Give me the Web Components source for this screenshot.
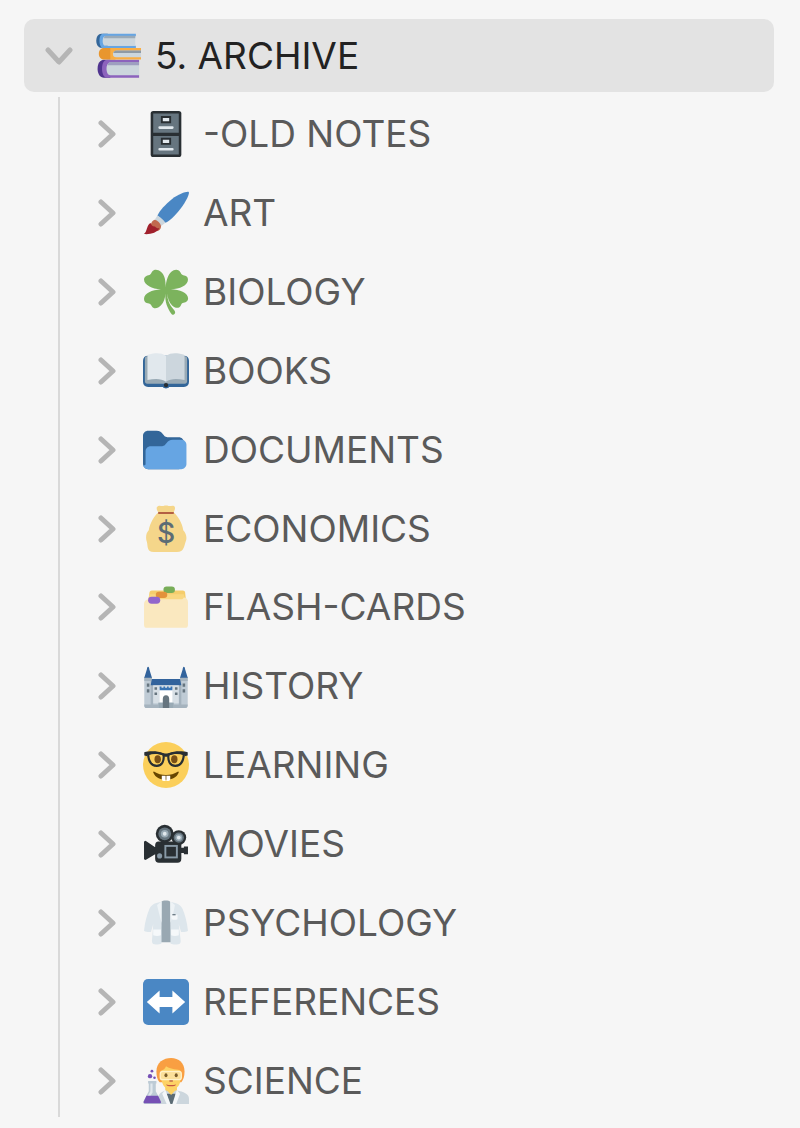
<!DOCTYPE html>
<html lang="en">
<head>
  <meta charset="utf-8">
  <meta name="viewport" content="width=device-width, initial-scale=1">
  <title>Archive</title>
  <style>
    body {
      margin: 0;
      background: #f6f6f6;
      color: #5a5a5a;
      font-family: Inter, "Liberation Sans", sans-serif;
      font-optical-sizing: none;
    }
  </style>
</head>
<body>
  <folder-tree>
    <folder-item icon="books" open>
      <span slot="title">5. ARCHIVE</span>
      <folder-item icon="cabinet"><span slot="title">-OLD NOTES</span></folder-item>
      <folder-item icon="brush"><span slot="title">ART</span></folder-item>
      <folder-item icon="clover"><span slot="title">BIOLOGY</span></folder-item>
      <folder-item icon="openbook"><span slot="title">BOOKS</span></folder-item>
      <folder-item icon="folder"><span slot="title">DOCUMENTS</span></folder-item>
      <folder-item icon="moneybag"><span slot="title">ECONOMICS</span></folder-item>
      <folder-item icon="dividers"><span slot="title">FLASH-CARDS</span></folder-item>
      <folder-item icon="castle"><span slot="title">HISTORY</span></folder-item>
      <folder-item icon="nerd"><span slot="title">LEARNING</span></folder-item>
      <folder-item icon="camera"><span slot="title">MOVIES</span></folder-item>
      <folder-item icon="labcoat"><span slot="title">PSYCHOLOGY</span></folder-item>
      <folder-item icon="arrows"><span slot="title">REFERENCES</span></folder-item>
      <folder-item icon="scientist"><span slot="title">SCIENCE</span></folder-item>
    </folder-item>
  </folder-tree>

  <script>
    // All drawn on a 36 x 36 grid
    const ICONS = {
      books: `
        <path fill="#336699" d="M5 .5h5v11H5C2.500 11.500 1 9 1 6S2.500.5 5 .5z"/>
        <path fill="#66a5e3" d="M6.500.5H32v2H8v7.500h24v1.700H6.500C4.500 11.700 3.500 9 3.500 6S4.500.5 6.500.5z"/>
        <path fill="#ccd6dd" d="M8 2.500h23.500v7.500H8C6.800 10 6 8.500 6 6.200S6.800 2.500 8 2.500z"/>
        <path fill="#9aaab8" d="M8 2.200h23.500v2H7C7.200 3 7.500 2.500 8 2.200z"/>
        <path fill="#50348f" d="M7 21h5v14H7c-3 0-5-3-5-7s2-7 5-7z"/>
        <path fill="#8c63bd" d="M9.500 21H34.500v2H12v9.800h22.500V35H9.500C7 35 5.500 32 5.500 28s1.500-7 4-7z"/>
        <path fill="#ccd6dd" d="M12 23h22.500v10H12c-1.800 0-3-2-3-5s1.200-5 3-5z"/>
        <path fill="#9e9fc0" d="M11.500 22.700h23v2.500H9.800c.4-1.300 1-2.200 1.700-2.500z"/>
        <path fill="#e8962e" d="M7 11.800h9v9H7c-2.500 0-4-2-4-4.500s1.500-4.500 4-4.500z"/>
        <path fill="#f9ad43" d="M12 11.800h24v2H16.500v5H36v2H12z"/>
        <path fill="#ccd6dd" d="M16.500 13.800H36V19H16.500c-1.500 0-2.500-1-2.500-2.600s1-2.600 2.500-2.600z"/>
        <path fill="#8f9aa5" d="M16.500 13.700H36v2H14.300c.4-1.200 1.200-2 2.200-2z"/>`,
      cabinet: `
        <rect x="6" width="24" height="36" rx="2" fill="#292f33"/>
        <path fill="#66757f" d="M8 2h20v15H8zM8 19.500h20V34H8z"/>
        <path fill="#292f33" d="M14 4h8v5.500h-8zM14 21h8v5.500h-8z"/>
        <path fill="#e1e8ed" d="M15.500 5.500h5V8h-5zM15.500 22.500h5V25h-5z"/>
        <path stroke="#e1e8ed" stroke-width="2" stroke-linecap="round" d="M13 13h10M13 30h10"/>`,
      brush: `
        <path fill="#4a87c4" d="M35.800 1.600c.9 1-1.800 7-6.300 12.900-4 5.200-8.500 9.800-12 11.200l-6.200-5.700c1.700-4 6.500-9 11.500-13C28 3 34.800.7 35.800 1.600z"/>
        <path fill="#ccd6dd" d="M11.300 20c1.800.8 4.800 3.500 6.200 5.700l-3.300 2.400c-1-2.200-3-4.200-5-4.900z"/>
        <path fill="#c1694f" d="M9.200 23.200c2.300.5 4.200 2.500 5 4.900-.2 2.500-1.600 4-3.600 4.200L6 28c.2-2.500 1.400-4.300 3.200-4.800z"/>
        <path fill="#a0202c" d="M6 25.800c.6 1.800 1.200 2.600 3 2.700 1 .1 1 1.500 3.700 1.500-1.500 3.500-7.200 5-12 4.500 2.600-1.800 2.200-7.500 5.300-8.700z"/>`,
      clover: `
        <path fill="#7cb35d" d="M17.700 14.500C17.900 9 17 4.800 14.200 2.300 11.700.1 8.700-.2 7.200 2c-.8 1.200-.9 2.200-2.100 2.700C2.700 5.200.8 6.200.8 8.300c0 4.200 6.200 7.400 13.200 7.700C7 16.200.9 18.900.8 23.200c0 2.500 1.500 3.300 3.900 3.800 1.300.3 1.500 1 2.200 2.200 1.500 2.600 4.900 1.700 7.200-.8 2.100-2.300 3.200-5.200 3.500-9.500-.7 7 1.600 11.600 4.400 15.900 1.200 1.900 3.600.7 3.100-1.300-.8-3-5.800-4.600-6.300-14.600.6 4.100 1.600 7.300 4 9.600 2.300 2.300 5.700 2.900 7-.3.400-1.100.7-1.500 2-1.700 2.200-.4 3.600-1.600 3.500-3.600-.2-4.300-6.500-6.800-13.600-7 7.200-.2 13.400-3.100 13.500-7.500 0-2.500-1.600-3.200-3.700-3.600-1.200-.3-1.500-.8-2-1.900C28.300.1 24.600-.1 22.200 2.200c-2.700 2.500-4.100 7-4.500 12.300z"/>`,
      openbook: `
        <path fill="#336699" d="M4 6h28c2.500 0 4 1.500 4 4v16.500c0 2.500-1.500 4-4 4H20.500c-1 1.500-4 1.500-5 0H4c-2.500 0-4-1.500-4-4V10c0-2.500 1.500-4 4-4z"/>
        <path fill="#99aab5" d="M3 6.500h30c1 0 1.500.8 1.500 2V26c0 1.200-.7 2-1.800 2H3.300c-1.100 0-1.800-.8-1.800-2V8.500c0-1.200.5-2 1.500-2z"/>
        <path fill="#e1e8ed" d="M18 6.200C14 3.200 9.500 3.800 4.500 5c-.8.200-1 .7-1 1.400V25c6-1 11-1.200 14.500 1.500z"/>
        <path fill="#ccd6dd" d="M18 6.200c4-3 8.500-2.400 13.500-1.200.8.200 1 .7 1 1.400V25c-6-1-11-1.200-14.500 1.500z"/>
        <circle cx="18" cy="29" r="1.700" fill="#292f33"/>`,
      folder: `
        <path fill="#336699" d="M0 29c0 2.209 1.791 4 4 4h24c2.209 0 4-1.791 4-4V12c0-2.209-1.791-4-4-4h-9c-3.562 0-3-5-8.438-5H4C1.791 3 0 4.791 0 7v22z"/>
        <path fill="#66a5e3" d="M30 10h-6.562C18 10 18.562 15 15 15H6c-2.209 0-4 1.791-4 4v10c0 .553-.447 1-1 1s-1-.447-1-1c0 2.209 1.791 4 4 4h26c2.209 0 4-1.791 4-4V14c0-2.209-1.791-4-4-4z"/>`,
      moneybag: `
        <path fill="#f5d68a" d="M12 0c1.500-.7 2.500.4 4 0s2.700-.4 4 0 2.800-.6 4.200 0c1.300.8 1 2.500-.2 5 3 2.500 6.800 8 7.500 14 2.500 2.500 3 6.500 2 8.500-1.200 3-1 8.500-7 8.500h-18c-6 0-4.500-5-5.500-8-1.200-3.500-.5-7 1.500-9C5.500 13 9 7.500 12 5c-1.500-2.500-2-4.200 0-5z"/>
        <path stroke="#b35f43" stroke-width="1.600" stroke-linecap="round" d="M12.500 5.500h11"/>
        <text x="18" y="29" fill="#5c6c75" font-family="Inter, sans-serif" font-size="22" font-weight="500" text-anchor="middle">$</text>`,
      dividers: `
        <path fill="#f5cd6c" d="M7 5h24c1.500 0 2 .8 2 2l1 9H4L5 7c.1-1.300.7-2 2-2z"/>
        <rect x="16" y="2" width="9" height="5" rx="2.500" fill="#78ad58"/>
        <path fill="#f9d780" d="M5 8h27l2 9H3z"/>
        <rect x="10" y="6" width="9" height="5" rx="2.500" fill="#e2923b"/>
        <path fill="#fae8bf" d="M5 12h25c1-.2 1.500-.7 2-1.500 1.800 0 3.200 1.600 3.200 3.500v18c0 1.500-.8 2.200-2.200 2.200H3C1.600 34.200.8 33.500.8 32V16c0-2.500 1.700-4 4.200-4z"/>
        <rect x="4" y="10" width="9.500" height="5.500" rx="2.700" fill="#9266cc"/>`,
      castle: `
        <path fill="#bfcbd5" d="M1 11h6v4h22v-4h6v22c0 1.500-.7 2.200-2 2.200H3c-1.300 0-2-.7-2-2.200z"/>
        <path fill="#a5b3be" d="M1 11h6v3H1zM29 11h6v3h-6zM6 14h2v21H6zM28 14h2v21h-2zM1 32.500h11v2.700H3c-1.300 0-2-.7-2-2.200zM24 32.500h11c0 1.900-.7 2.700-2 2.700h-9z"/>
        <path fill="#32639c" d="M4 3c.6 0 .8.800 1 2l2 6.500H1L3 5c.2-1.200.4-2 1-2zM32 3c.6 0 .8.800 1 2l2 6.500h-6L31 5c.2-1.200.4-2 1-2zM7 12.500h22l1 5H6z"/>
        <path fill="#d7dfe5" d="M8 17.500h20v14H8z"/>
        <path fill="#fff" d="M13 20h10v11H13z"/>
        <path fill="#3974b3" d="M13 18.300h1.500v1h1.500v-1h1.300v1h1.500v-1h1.300v1h1.500v-1H23v3H13z"/>
        <path fill="#99aab5" d="M12 31h12v4.200H12z"/>
        <path fill="#66757f" d="M15.500 35.200v-7a2.500 3 0 0 1 5 0v7zM3 16h2v2.500H3zM3 20.500h2V23H3zM31 16h2v2.500h-2zM31 20.500h2V23h-2zM9 19h2v2H9zM9 23h2v2H9zM25 19h2v2h-2zM25 23h2v2h-2z"/>`,
      nerd: `
        <circle cx="18" cy="18" r="18" fill="#fbcf5b"/>
        <path fill="#664500" d="M8.500 23c3 1.900 6 2.800 9.500 2.800s6.500-.9 9.500-2.800c.6 0 .6.700.3 1.200-1.500 3.500-5 5.300-9.800 5.300s-8.300-1.800-9.800-5.300c-.3-.5-.3-1.200.3-1.200z"/>
        <path fill="#fff" d="M14.700 26.500h3v4h-1.500c-1 0-1.500-.6-1.500-1.500zM18.300 26.500h3V29c0 .9-.5 1.500-1.500 1.500h-1.500z"/>
        <ellipse cx="11.500" cy="13.500" rx="2.500" ry="3.200" fill="#7a5016"/>
        <ellipse cx="24.500" cy="13.500" rx="2.500" ry="3.200" fill="#7a5016"/>
        <path fill="none" stroke="#292f33" stroke-width="1.700" d="M4 9.500c3-1.300 8-1.300 12 .2.800 4.800-1 9-5.200 9C6 18.700 4.300 14 4 9.500zM32 9.500c-3-1.300-8-1.300-12 .2-.8 4.800 1 9 5.200 9C30 18.700 31.700 14 32 9.500z"/>
        <path fill="#292f33" d="M1 8c4-1.200 11-1 14.500.6 1.700.6 3.300.6 5 0C24 7 31 6.800 35 8v2.500l-2.500.7V10c-4-.8-9-1-12 .5-1 1.300-4 1.300-5 0-3-1.500-8-1.300-12-.5v1.200L1 10.500z"/>`,
      camera: `
        <path fill="#292f33" d="M.8 16l1.200-.5 7.500 5V19c0-2 1-3 2.500-3h15c2 0 3 1 3 3v2h2v-1h3.200v6H32v-1h-2v4.500c0 2-1 3.200-3 3.200H12.500c-2 0-3-1.200-3-3.200V26L2 30.500l-1.200-.5z"/>
        <circle cx="17" cy="10" r="7" fill="#292f33"/>
        <circle cx="28" cy="13" r="5.800" fill="#292f33"/>
        <circle cx="17" cy="10" r="5" fill="#66757f"/>
        <circle cx="28" cy="13" r="4" fill="#66757f"/>
        <circle cx="17" cy="10" r="3" fill="#99aab5"/>
        <circle cx="28" cy="13" r="2.700" fill="#99aab5"/>
        <circle cx="17" cy="10" r="1.500" fill="#e1e8ed"/>
        <circle cx="28" cy="13" r="1.500" fill="#e1e8ed"/>
        <circle cx="13" cy="27.300" r="2" fill="#8899a6"/>
        <rect x="17.500" y="19.500" width="9" height="9" fill="none" stroke="#8899a6" stroke-width="1.500"/>`,
      labcoat: `
        <path fill="#99a8b2" d="M14.300 1.500c1-1.500 6.100-1.500 7.100 0L22 33h-8z"/>
        <path fill="#dde6ec" d="M13.500 1.500C9 2.500 6.500 3.500 5 7 3 12 1.500 17 .8 24c1.500 1 3.500 1.200 5.400 1L8 19l-1 13c0 1.500.5 2.300 2 2.600 2 .5 4 .3 5.500-.6V1.500zM22 1.500c4.500 1 7.500 2 9 5.500 2 5 3.500 10 4.200 17-1.500 1-3.500 1.200-5.400 1L28 19l1.500 13c0 1.500-.5 2.300-2 2.600-2 .5-4.500.3-6-.6V1.500z"/>
        <path fill="#eef3f6" d="M14.500 1.200L11 4l1.200 5 2.300 9zM21.500 1.200L25 4l-1 5-2.500 9z"/>
        <path fill="#f5f8fa" d="M8 23h6v4.500c-2 .8-4 .8-6 0zM22 23h6v4.500c-2 .8-4 .8-6 0zM22.500 11.500h4.500V15c-1.500.7-3 .7-4.500 0z"/>
        <path fill="#66757f" d="M23 11h2.500v1H23z"/>`,
      arrows: `
        <rect width="36" height="36" rx="4" fill="#4a87c4"/>
        <path fill="#fff" d="M33 18L23 9v5H13V9L3 18l10 9v-5h10v5z"/>`,
      scientist: `
        <path fill="#f99f42" d="M22 0c6 0 10.500 4 10.500 10.500 0 4-1 6.500-2.500 8.500H13c-1.800-2-2.500-5-2.500-8.500C10.500 3.500 16 0 22 0z"/>
        <path fill="#f9ca55" d="M17.500 22h9v6l-4.500 4-4.500-4z"/>
        <path fill="#fdd264" d="M14 10c2-.5 3.200-1.500 4-3.500 2.500 1.800 7 2.500 11 3 .8 1 .8 8-.3 10.500-1.200 3.200-4 5-6.700 5s-5.500-1.800-6.700-5C14 17 13.500 12.500 14 10z"/>
        <path fill="#ccd6dd" d="M12 36v-5c0-3 2.500-4.500 6-5.500h8.500c5 1 9.500 2.500 9.500 6.500v4z"/>
        <path fill="#5c6c75" d="M18.500 28h7l-1 8h-4z"/>
        <path fill="#f4f7f9" d="M17.500 25l-2.500 3 3.500 8h3zM26.500 25l2.500 3-3 8h-3z"/>
        <path fill="#fdd264" d="M17.500 24h9L22 29z"/>
        <rect x="13.500" y="10.500" width="16.500" height="6.500" rx="2" fill="#fbe09a" stroke="#fff1c9" stroke-width="1"/>
        <ellipse cx="18" cy="13.500" rx="1.200" ry="1.500" fill="#795b2a"/>
        <ellipse cx="26" cy="13.500" rx="1.200" ry="1.500" fill="#795b2a"/>
        <path fill="none" stroke="#c1694f" stroke-linecap="round" d="M21 18h2"/>
        <path fill="#c65643" d="M18 20.700c3 .7 5 .7 8 0-.5 2-7.500 2-8 0z"/>
        <path fill="#bdcbd5" d="M4 18h6.500v2H10v6l4.200 8c.4 1-.2 2-1.200 2H1.500C.5 36-.1 35 .3 34l4.200-8v-6H4z"/>
        <path fill="#e1e8ed" d="M5.800 20h1.700v7L5 31H3l2.800-5z"/>
        <path fill="#7650b5" d="M2.700 29.500h9.100l2.200 4.800c.2.800-.2 1.200-1 1.200H1.500c-.8 0-1.200-.5-1-1.200z"/>
        <circle cx="5.500" cy="14.200" r="1.700" fill="#7650b5"/>
        <circle cx="9" cy="15.500" r="1" fill="#7650b5"/>
        <circle cx="7" cy="10.300" r="1.100" fill="#7650b5"/>`
    };

    class EmojiIcon extends HTMLElement {
      connectedCallback() {
        const root = this.attachShadow({ mode: 'open' });
        root.innerHTML = `
          <style>
            :host {
              display: block;
              flex: none;
              width: 46px;
              height: 46px;
            }
            svg {
              display: block;
              width: 100%;
              height: 100%;
              overflow: visible;
            }
          </style>
          <svg viewBox="0 0 36 36" fill="none" aria-hidden="true">${ICONS[this.getAttribute('name')] || ''}</svg>
        `;
      }
    }

    class FolderItem extends HTMLElement {
      static getTemplate(icon) {
        return `
          <style>
            :host {
              display: flex;
              flex-direction: column;
            }
            .row {
              display: flex;
              flex: 1;
              align-items: center;
              box-sizing: border-box;
              width: 100%;
              padding: 12px 20px 12px 21px;
              border: 0;
              border-radius: 10px;
              background: none;
              color: inherit;
              font: inherit;
              font-optical-sizing: none;
              font-size: 37px;
              line-height: 48px;
              text-align: left;
              cursor: pointer;
            }
            :host([open]) .row {
              flex: none;
              min-height: 73px;
              background: #e3e3e3;
              color: #222222;
            }
            .chevron {
              flex: none;
              width: 28px;
              height: 28px;
              margin-right: 22px;
            }
            :host([open]) .chevron {
              transform: rotate(90deg);
            }
            emoji-icon {
              margin-right: 14px;
            }
            .children {
              display: none;
            }
            :host([open]) .children {
              display: grid;
              flex: 1;
              grid-auto-rows: 1fr;
              row-gap: 6px;
              margin: 5px 0 0 34px;
              padding: 1px 0 0 12px;
              border-left: 2px solid #d9d9d9;
            }
          </style>
          <button class="row" type="button">
            <svg class="chevron" viewBox="0 0 28 28" fill="none" stroke="#b5b5b5" stroke-width="5" stroke-linecap="round" stroke-linejoin="round" aria-hidden="true">
              <path d="M8 3l12 11L8 25"/>
            </svg>
            <emoji-icon name="${icon}"></emoji-icon>
            <slot name="title"></slot>
          </button>
          <div class="children"><slot></slot></div>
        `;
      }

      static get observedAttributes() {
        return ['open'];
      }

      connectedCallback() {
        this.root = this.attachShadow({ mode: 'open' });
        this.root.innerHTML = FolderItem.getTemplate(this.getAttribute('icon'));
        this.button = this.root.querySelector('button');
        this.button.addEventListener('click', () => this.toggleAttribute('open'));
        this.update();
      }

      attributeChangedCallback() {
        this.update();
      }

      update() {
        if (this.button)
          this.button.setAttribute('aria-expanded', this.hasAttribute('open'));
      }
    }

    class FolderTree extends HTMLElement {
      connectedCallback() {
        const root = this.attachShadow({ mode: 'open' });
        root.innerHTML = `
          <style>
            :host {
              display: flex;
              box-sizing: border-box;
              min-height: 100vh;
              padding: 19px 26px 11px 24px;
            }
            nav {
              display: grid;
              flex: 1;
            }
          </style>
          <nav aria-label="Folders"><slot></slot></nav>
        `;
      }
    }

    customElements.define('emoji-icon', EmojiIcon);
    customElements.define('folder-item', FolderItem);
    customElements.define('folder-tree', FolderTree);
  </script>
</body>
</html>
